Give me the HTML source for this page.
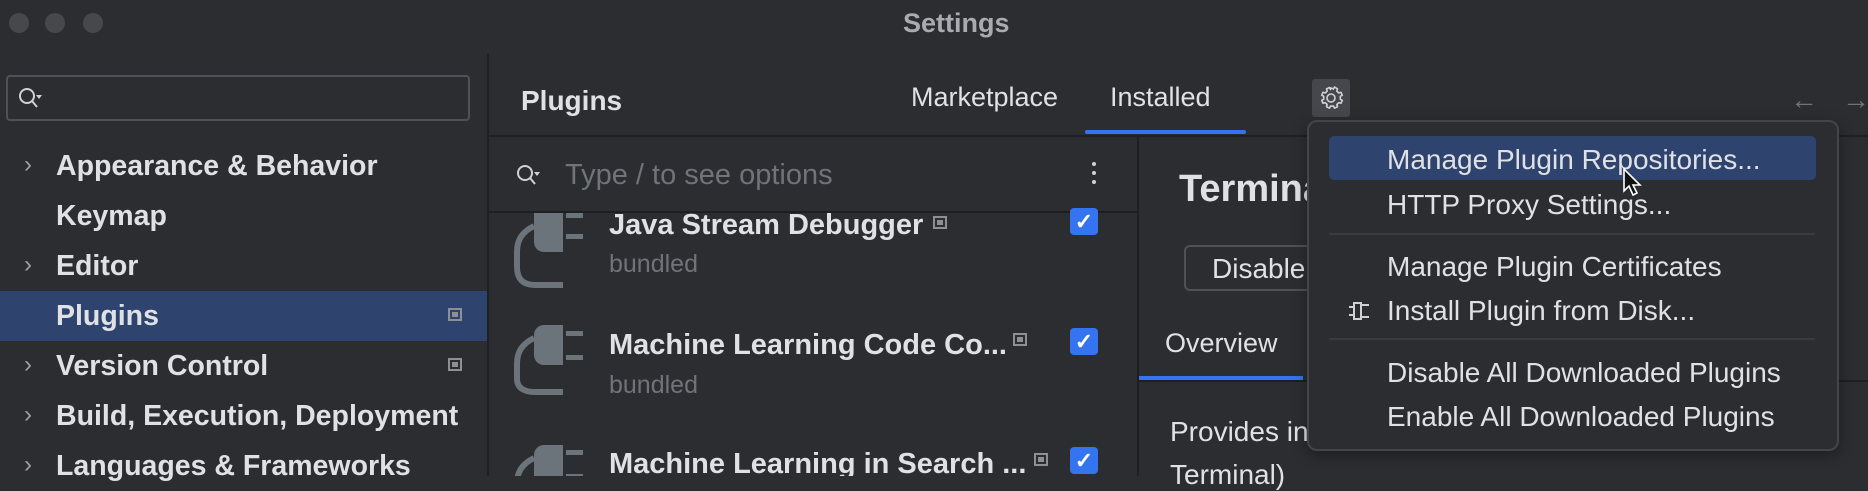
<!DOCTYPE html>
<html><head><meta charset="utf-8"><style>
*{margin:0;padding:0;box-sizing:border-box}
body{width:1868px;height:476px;background:#2b2d30;font-family:"Liberation Sans",sans-serif;color:#dfe1e5;position:relative;overflow:hidden}
.a{position:absolute;white-space:nowrap}
.tree{font-size:28.5px;font-weight:bold;left:56px}
.chev{left:24px;color:#9da0a8;font-size:24px}
.pm{font-size:28px;left:1387px}
.sep{position:absolute;left:1329px;width:486px;height:2px;background:#393b40}
.nm{font-size:29px;font-weight:bold;left:609px}
.bd{font-size:25px;color:#6f737a;left:609px}
.cb{position:absolute;left:1070px;width:28px;height:27px;background:#3574f0;border-radius:4px;color:#fff;font-size:22px;text-align:center;line-height:27px;font-weight:bold}
.ic{position:absolute;width:14px;height:13px;border:2px solid #8c8f94}
.ic::after{content:"";position:absolute;left:2px;top:2px;width:6px;height:5px;background:#8c8f94}
</style></head><body>
<!-- title bar -->
<div class="a" style="left:9px;top:13px;width:20px;height:20px;border-radius:50%;background:#47484c"></div>
<div class="a" style="left:45px;top:13px;width:20px;height:20px;border-radius:50%;background:#47484c"></div>
<div class="a" style="left:83px;top:13px;width:20px;height:20px;border-radius:50%;background:#47484c"></div>
<div class="a" style="left:903px;top:8px;font-size:27px;font-weight:bold;color:#a8abb0">Settings</div>

<!-- sidebar -->
<div class="a" style="left:487px;top:54px;width:2px;height:422px;background:#1e1f22"></div>
<div class="a" style="left:6px;top:75px;width:464px;height:46px;border:2px solid #4e5157;border-radius:4px"></div>
<svg class="a" style="left:16px;top:86px" width="36" height="26" viewBox="0 0 36 26"><circle cx="11" cy="10" r="7" fill="none" stroke="#cfd1d6" stroke-width="2"/><path d="M16 15l5 6" stroke="#cfd1d6" stroke-width="2"/><path d="M20 9h6l-3 4z" fill="#cfd1d6"/></svg>
<div class="a" style="left:0;top:291px;width:487px;height:50px;background:#2e436e"></div>
<div class="a chev" style="top:151px">&#x203A;</div>
<div class="a tree" style="top:150px">Appearance &amp; Behavior</div>
<div class="a tree" style="top:200px">Keymap</div>
<div class="a chev" style="top:251px">&#x203A;</div>
<div class="a tree" style="top:250px">Editor</div>
<div class="a tree" style="top:300px">Plugins</div>
<div class="ic" style="left:448px;top:308px"></div>
<div class="a chev" style="top:351px">&#x203A;</div>
<div class="a tree" style="top:350px">Version Control</div>
<div class="ic" style="left:448px;top:358px"></div>
<div class="a chev" style="top:401px">&#x203A;</div>
<div class="a tree" style="top:400px">Build, Execution, Deployment</div>
<div class="a chev" style="top:451px">&#x203A;</div>
<div class="a tree" style="top:450px">Languages &amp; Frameworks</div>

<!-- header -->
<div class="a" style="left:521px;top:85px;font-size:28px;font-weight:bold">Plugins</div>
<div class="a" style="left:911px;top:82px;font-size:27px">Marketplace</div>
<div class="a" style="left:1110px;top:82px;font-size:27px">Installed</div>
<div class="a" style="left:1085px;top:130px;width:161px;height:4px;background:#3574f0;border-radius:2px"></div>
<div class="a" style="left:1312px;top:79px;width:38px;height:38px;background:#45474c;border-radius:3px"></div>
<svg class="a" style="left:1317px;top:84px" width="28" height="28" viewBox="0 0 28 28"><path d="M14 4l2.5 1 1-2 3 1.8-.7 2.2 2 2 2.2-.7 1.3 3-2 1v3l2 1-1.3 3-2.2-.7-2 2 .7 2.2-3 1.3-1-2h-3l-1 2-3-1.3.7-2.2-2-2-2.2.7-1.3-3 2-1v-3l-2-1 1.3-3 2.2.7 2-2-.7-2.2 3-1.3 1 2z" fill="none" stroke="#cfd1d6" stroke-width="1.6" stroke-linejoin="round"/><circle cx="14" cy="14" r="4" fill="none" stroke="#cfd1d6" stroke-width="1.6"/></svg>
<div class="a" style="left:1790px;top:84px;font-size:28px;color:#6f737a">&#x2190;</div>
<div class="a" style="left:1842px;top:84px;font-size:28px;color:#6f737a">&#x2192;</div>
<div class="a" style="left:489px;top:135px;width:1379px;height:2px;background:#1e1f22"></div>

<!-- list -->
<svg class="a" style="left:514px;top:163px" width="36" height="26" viewBox="0 0 36 26"><circle cx="11" cy="10" r="7" fill="none" stroke="#cfd1d6" stroke-width="2"/><path d="M16 15l5 6" stroke="#cfd1d6" stroke-width="2"/><path d="M20 9h6l-3 4z" fill="#cfd1d6"/></svg>
<div class="a" style="left:565px;top:159px;font-size:29px;color:#6f737a">Type / to see options</div>
<div class="a" style="left:1092px;top:162px;width:4px;height:4px;border-radius:50%;background:#cfd1d6;box-shadow:0 9px 0 #cfd1d6,0 18px 0 #cfd1d6"></div>
<div class="a" style="left:489px;top:211px;width:649px;height:2px;background:#1e1f22"></div>
<div class="a" style="left:1137px;top:137px;width:2px;height:339px;background:#1e1f22"></div>

<div class="a" style="left:489px;top:213px;width:648px;height:263px;overflow:hidden">
<svg class="a" style="left:0;top:0" width="120" height="263" viewBox="489 213 120 263">
<g fill="#6b747a"><path d="M534 212h29v40h-19a10 10 0 0 1-10-10z"/><rect x="566" y="213" width="17" height="5"/><rect x="566" y="234" width="17" height="5"/><path d="M534 226c-12 6-17 14-17 26v15c0 12 6 18 18 18h28" fill="none" stroke="#6b747a" stroke-width="6"/></g>
<g fill="#6b747a"><path d="M544 325h19v40h-19a10 10 0 0 1-10-10v-20a10 10 0 0 1 10-10z"/><rect x="566" y="331" width="17" height="5"/><rect x="566" y="355" width="17" height="5"/><path d="M534 338c-12 6-17 14-17 26v15c0 8 6 13 18 13h28" fill="none" stroke="#6b747a" stroke-width="6"/></g>
<g fill="#6b747a"><path d="M544 445h19v40h-19a10 10 0 0 1-10-10v-20a10 10 0 0 1 10-10z"/><rect x="566" y="450" width="17" height="5"/><rect x="566" y="474" width="17" height="5"/><path d="M534 458c-12 6-17 14-17 26" fill="none" stroke="#6b747a" stroke-width="6"/></g>
</svg>
</div>
<div class="a" style="left:489px;top:213px;width:648px;height:263px;overflow:hidden">
<div class="a nm" style="left:120px;top:-4px">Java Stream Debugger</div>
<div class="ic" style="left:444px;top:3px"></div>
<div class="a bd" style="left:120px;top:37px">bundled</div>
<div class="a nm" style="left:120px;top:116px">Machine Learning Code Co...</div>
<div class="ic" style="left:524px;top:120px"></div>
<div class="a bd" style="left:120px;top:158px">bundled</div>
<div class="a nm" style="left:120px;top:235px">Machine Learning in Search ...</div>
<div class="ic" style="left:545px;top:240px"></div>
</div>
<div class="cb" style="top:208px">&#x2713;</div>
<div class="cb" style="top:328px">&#x2713;</div>
<div class="cb" style="top:447px">&#x2713;</div>

<!-- details -->
<div class="a" style="left:1179px;top:168px;font-size:38px;font-weight:bold">Terminal</div>
<div class="a" style="left:1184px;top:245px;width:160px;height:46px;border:2px solid #4e5157;border-radius:6px"></div>
<div class="a" style="left:1212px;top:253px;font-size:28px">Disable</div>
<div class="a" style="left:1165px;top:328px;font-size:27px">Overview</div>
<div class="a" style="left:1139px;top:376px;width:164px;height:4px;background:#3574f0"></div>
<div class="a" style="left:1139px;top:380px;width:729px;height:2px;background:#1e1f22"></div>
<div class="a" style="left:1170px;top:416px;font-size:28px">Provides integrated</div>
<div class="a" style="left:1170px;top:459px;font-size:28px">Terminal)</div>

<!-- popup -->
<div class="a" style="left:1307px;top:120px;width:532px;height:331px;background:#2b2d30;border:2px solid #43454a;border-radius:10px;box-shadow:0 4px 14px rgba(0,0,0,.35)"></div>
<div class="a" style="left:1329px;top:136px;width:487px;height:44px;background:#2e436e;border-radius:5px"></div>
<div class="a pm" style="top:144px">Manage Plugin Repositories...</div>
<div class="a pm" style="top:189px">HTTP Proxy Settings...</div>
<div class="sep" style="top:233px"></div>
<div class="a pm" style="top:251px">Manage Plugin Certificates</div>
<div class="a pm" style="top:295px">Install Plugin from Disk...</div>
<svg class="a" style="left:1347px;top:300px" width="26" height="22" viewBox="0 0 26 22"><path d="M2 7h5M2 15h5M7 3h7v16H7z" fill="none" stroke="#cfd1d6" stroke-width="2"/><path d="M14 5h8M14 17h8" stroke="#cfd1d6" stroke-width="2"/></svg>
<div class="sep" style="top:338px"></div>
<div class="a pm" style="top:357px">Disable All Downloaded Plugins</div>
<div class="a pm" style="top:401px">Enable All Downloaded Plugins</div>
<svg class="a" style="left:1622px;top:167px" width="20" height="30" viewBox="0 0 20 30"><path d="M2 2v22l5-5 4 9 4-2-4-8h7z" fill="#111" stroke="#fff" stroke-width="1.6"/></svg>
</body></html>
